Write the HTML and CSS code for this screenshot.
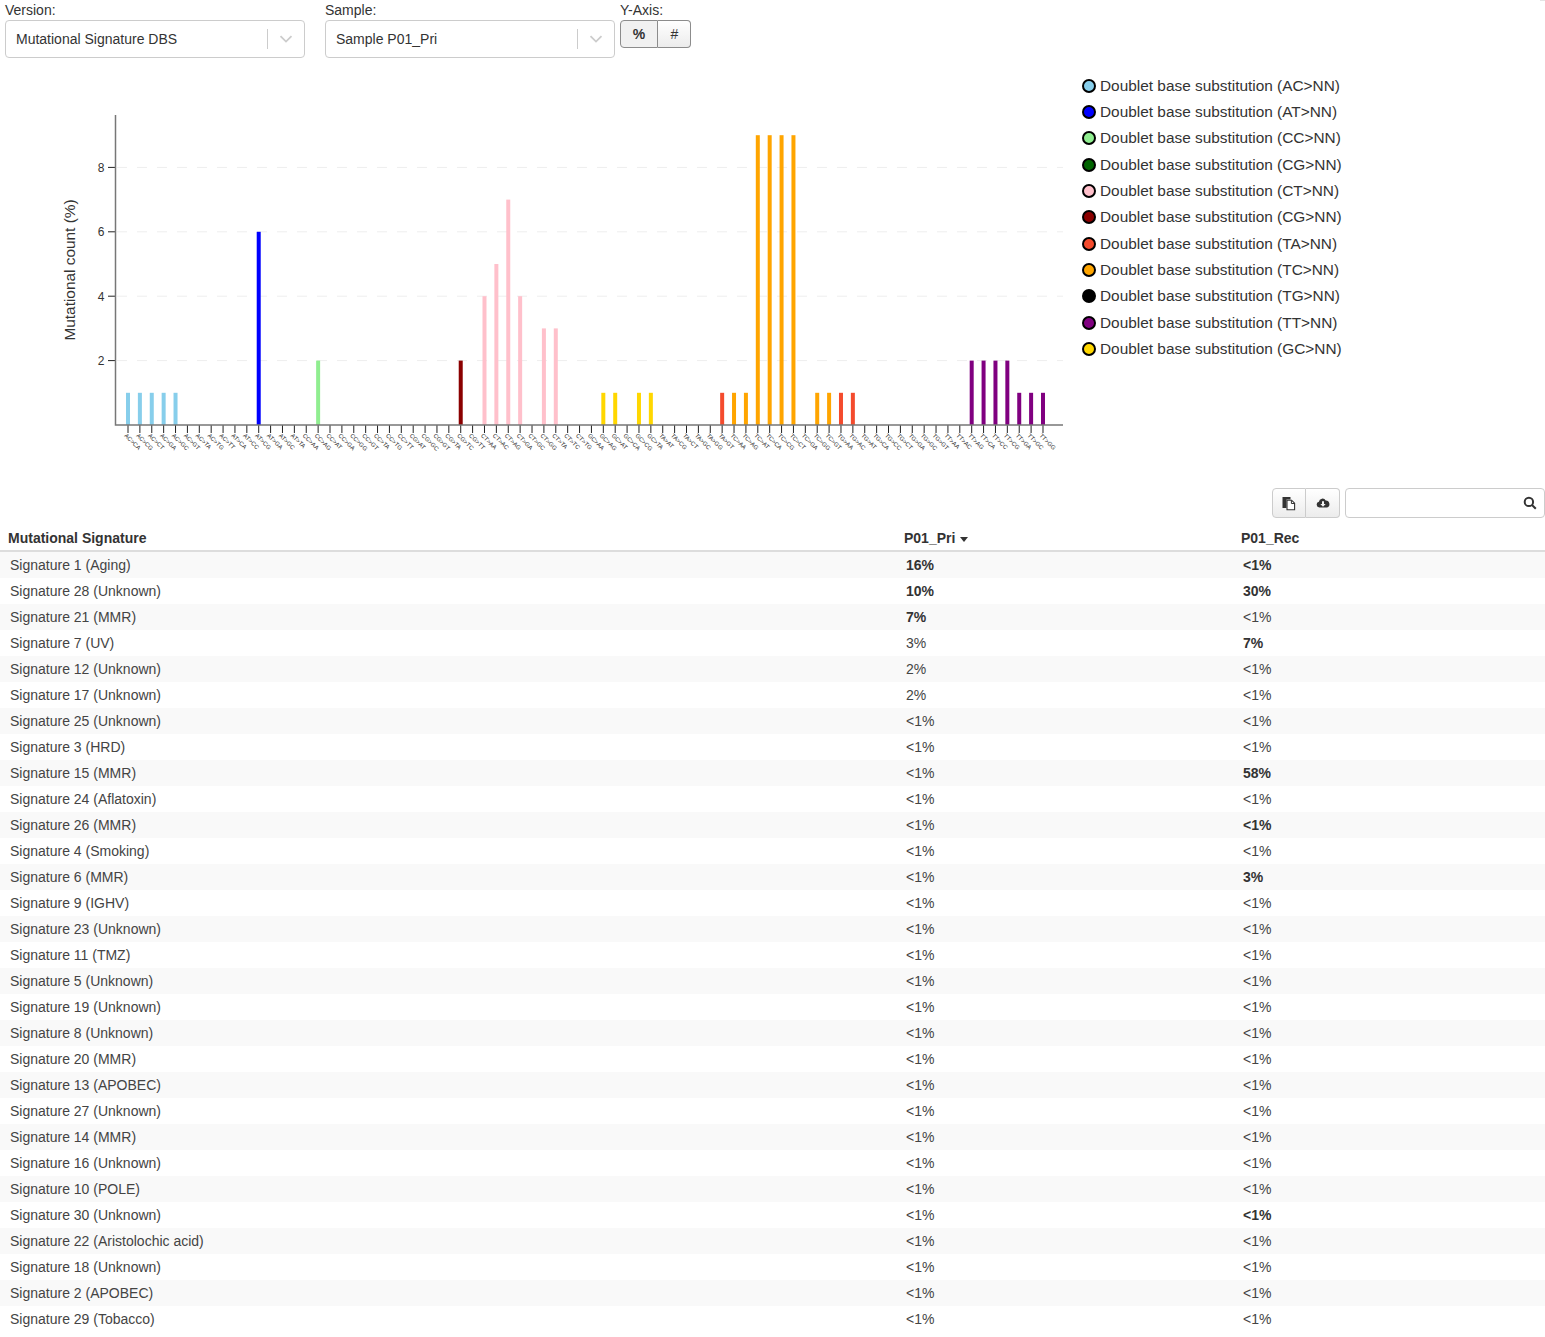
FILE: index.html
```html
<!DOCTYPE html>
<html lang="en">
<head>
    <meta charset="UTF-8">
    <meta name="viewport" content="width=device-width, initial-scale=1.0">
    <title>Mutational Signature</title>
    <link rel="stylesheet" href="styles.css">
</head>
<body>
    <span class="corner"></span>
    <div class="filters">
        <div class="filter filter-version">
            <label>Version:</label>
            <div class="select">
                <span class="select-value">Mutational Signature DBS</span>
                <span class="select-sep"></span>
                <svg class="select-arrow" viewBox="0 0 20 20"><path d="M4.5 7.2 L10 12.6 L15.5 7.2" /></svg>
            </div>
        </div>
        <div class="filter filter-sample">
            <label>Sample:</label>
            <div class="select">
                <span class="select-value">Sample P01_Pri</span>
                <span class="select-sep"></span>
                <svg class="select-arrow" viewBox="0 0 20 20"><path d="M4.5 7.2 L10 12.6 L15.5 7.2" /></svg>
            </div>
        </div>
        <div class="filter">
            <label>Y-Axis:</label>
            <div class="btn-group">
                <button type="button" class="btn btn-pct">%</button>
                <button type="button" class="btn btn-num">#</button>
            </div>
        </div>
    </div>

    <div class="chart-row">
        <svg id="chart" class="chart" width="1075" height="410" viewBox="0 0 1075 410"></svg>
        <ul class="legend">
            <li><span class="dot c-ac"></span>Doublet base substitution (AC&gt;NN)</li>
            <li><span class="dot c-at"></span>Doublet base substitution (AT&gt;NN)</li>
            <li><span class="dot c-cc"></span>Doublet base substitution (CC&gt;NN)</li>
            <li><span class="dot c-cg"></span>Doublet base substitution (CG&gt;NN)</li>
            <li><span class="dot c-ct"></span>Doublet base substitution (CT&gt;NN)</li>
            <li><span class="dot c-cg2"></span>Doublet base substitution (CG&gt;NN)</li>
            <li><span class="dot c-ta"></span>Doublet base substitution (TA&gt;NN)</li>
            <li><span class="dot c-tc"></span>Doublet base substitution (TC&gt;NN)</li>
            <li><span class="dot c-tg"></span>Doublet base substitution (TG&gt;NN)</li>
            <li><span class="dot c-tt"></span>Doublet base substitution (TT&gt;NN)</li>
            <li><span class="dot c-gc"></span>Doublet base substitution (GC&gt;NN)</li>
        </ul>
    </div>

    <div class="toolbar">
        <div class="btn-group">
            <button type="button" class="btn btn-icon">
                <svg viewBox="0 0 14 15" width="14" height="15"><path class="ic" d="M0.5 1h8v2.5H4.5V12H0.5z"/><path class="ic-doc" d="M5 4.2h4.6l3 3v6.6H5z"/><path class="ic-fold" d="M9.4 4.5v3h3"/></svg>
            </button>
            <button type="button" class="btn btn-icon">
                <svg viewBox="0 0 14 14" width="14" height="14"><path class="ic" fill-rule="evenodd" d="M3.4 11.6A3 3 0 0 1 2.9 5.7 3.6 3.6 0 0 1 9.7 4.6 3.6 3.6 0 0 1 11 11.6zM6 5.2v2.7H4.3L7 10.7l2.7-2.8H8V5.2z"/></svg>
            </button>
        </div>
        <div class="search">
            <svg viewBox="0 0 14 14" width="14" height="14"><circle class="ic-line" cx="5.9" cy="5.9" r="4.2"/><path class="ic-line" d="M9 9l3.8 3.8"/></svg>
        </div>
    </div>

    <table class="sig-table">
        <colgroup>
            <col class="col-name">
            <col class="col-pri">
            <col class="col-rec">
        </colgroup>
        <thead>
            <tr><th>Mutational Signature</th><th>P01_Pri <span class="caret"></span></th><th>P01_Rec</th></tr>
        </thead>
        <tbody>
            <tr><td>Signature 1 (Aging)</td><td><b>16%</b></td><td><b>&lt;1%</b></td></tr>
            <tr><td>Signature 28 (Unknown)</td><td><b>10%</b></td><td><b>30%</b></td></tr>
            <tr><td>Signature 21 (MMR)</td><td><b>7%</b></td><td>&lt;1%</td></tr>
            <tr><td>Signature 7 (UV)</td><td>3%</td><td><b>7%</b></td></tr>
            <tr><td>Signature 12 (Unknown)</td><td>2%</td><td>&lt;1%</td></tr>
            <tr><td>Signature 17 (Unknown)</td><td>2%</td><td>&lt;1%</td></tr>
            <tr><td>Signature 25 (Unknown)</td><td>&lt;1%</td><td>&lt;1%</td></tr>
            <tr><td>Signature 3 (HRD)</td><td>&lt;1%</td><td>&lt;1%</td></tr>
            <tr><td>Signature 15 (MMR)</td><td>&lt;1%</td><td><b>58%</b></td></tr>
            <tr><td>Signature 24 (Aflatoxin)</td><td>&lt;1%</td><td>&lt;1%</td></tr>
            <tr><td>Signature 26 (MMR)</td><td>&lt;1%</td><td><b>&lt;1%</b></td></tr>
            <tr><td>Signature 4 (Smoking)</td><td>&lt;1%</td><td>&lt;1%</td></tr>
            <tr><td>Signature 6 (MMR)</td><td>&lt;1%</td><td><b>3%</b></td></tr>
            <tr><td>Signature 9 (IGHV)</td><td>&lt;1%</td><td>&lt;1%</td></tr>
            <tr><td>Signature 23 (Unknown)</td><td>&lt;1%</td><td>&lt;1%</td></tr>
            <tr><td>Signature 11 (TMZ)</td><td>&lt;1%</td><td>&lt;1%</td></tr>
            <tr><td>Signature 5 (Unknown)</td><td>&lt;1%</td><td>&lt;1%</td></tr>
            <tr><td>Signature 19 (Unknown)</td><td>&lt;1%</td><td>&lt;1%</td></tr>
            <tr><td>Signature 8 (Unknown)</td><td>&lt;1%</td><td>&lt;1%</td></tr>
            <tr><td>Signature 20 (MMR)</td><td>&lt;1%</td><td>&lt;1%</td></tr>
            <tr><td>Signature 13 (APOBEC)</td><td>&lt;1%</td><td>&lt;1%</td></tr>
            <tr><td>Signature 27 (Unknown)</td><td>&lt;1%</td><td>&lt;1%</td></tr>
            <tr><td>Signature 14 (MMR)</td><td>&lt;1%</td><td>&lt;1%</td></tr>
            <tr><td>Signature 16 (Unknown)</td><td>&lt;1%</td><td>&lt;1%</td></tr>
            <tr><td>Signature 10 (POLE)</td><td>&lt;1%</td><td>&lt;1%</td></tr>
            <tr><td>Signature 30 (Unknown)</td><td>&lt;1%</td><td><b>&lt;1%</b></td></tr>
            <tr><td>Signature 22 (Aristolochic acid)</td><td>&lt;1%</td><td>&lt;1%</td></tr>
            <tr><td>Signature 18 (Unknown)</td><td>&lt;1%</td><td>&lt;1%</td></tr>
            <tr><td>Signature 2 (APOBEC)</td><td>&lt;1%</td><td>&lt;1%</td></tr>
            <tr><td>Signature 29 (Tobacco)</td><td>&lt;1%</td><td>&lt;1%</td></tr>
        </tbody>
    </table>

    <script src="chart.js"></script>
</body>
</html>
```

FILE: styles.css
```css
html, body {
    margin: 0;
    padding: 0;
}
body {
    font-family: 'Liberation Sans', Arial, sans-serif;
    font-size: 14px;
    color: #333;
    background: #fff;
    height: 1337px;
    overflow: hidden;
}
.corner {
    position: absolute;
    top: 0;
    right: 0;
    width: 5px;
    height: 1px;
    background: #e4e4e4;
}

/* filters on top */
.filters {
    display: flex;
    padding-left: 5px;
    height: 58px;
}
.filter label {
    display: block;
    height: 20px;
    line-height: 20px;
}
.filter-version {
    width: 300px;
    margin-right: 20px;
}
.filter-sample {
    width: 290px;
    margin-right: 5px;
}
.select {
    display: flex;
    align-items: center;
    height: 38px;
    box-sizing: border-box;
    border: 1px solid #ccc;
    border-radius: 4px;
    padding-left: 10px;
}
.select-value {
    flex: 1;
}
.select-sep {
    width: 1px;
    height: 20px;
    background: #ccc;
}
.select-arrow {
    width: 20px;
    height: 20px;
    margin: 0 8px;
    fill: none;
    stroke: #ccc;
    stroke-width: 1.8;
}
.btn-group {
    display: flex;
}
.btn {
    font-family: inherit;
    font-size: 14px;
    color: #333;
    background: linear-gradient(#fff, #e6e6e6);
    border: 1px solid #ccc;
    height: 28px;
    padding: 0;
    margin: 0;
    display: block;
}
.btn:first-child {
    border-radius: 4px 0 0 4px;
}
.btn:last-child {
    border-radius: 0 4px 4px 0;
    border-left: none;
}
.btn-pct {
    width: 38px;
    font-weight: bold;
    border-color: #8c8c8c;
    background: #f1f1f1;
}
.btn-num {
    width: 33px;
    padding-left: 1px;
    border-color: #8c8c8c;
    background: linear-gradient(#fff, #ececec);
}

/* chart and legend */
.chart-row {
    display: flex;
    height: 430px;
}
.chart {
    display: block;
    margin-top: 0;
}
.chart .axis {
    stroke: #777;
    stroke-width: 1.5;
    fill: none;
}
.chart .tick {
    stroke: #222;
    stroke-width: 1;
}
.chart .grid {
    stroke: #eee;
    stroke-width: 1;
    stroke-dasharray: 10 10;
}
.chart .y-num {
    font-size: 12px;
    fill: #333;
    text-anchor: end;
}
.chart .y-title {
    font-size: 15.4px;
    fill: #333;
    text-anchor: middle;
}
.chart .x-label {
    font-size: 6px;
    fill: #333;
}
.legend {
    list-style: none;
    margin: 14.6px 0 0;
    padding: 0 0 0 7px;
    font-size: 15.4px;
}
.legend li {
    display: flex;
    align-items: center;
    height: 26.33px;
    white-space: nowrap;
}
.dot {
    width: 10px;
    height: 10px;
    border: 2px solid #000;
    border-radius: 50%;
    margin-right: 4px;
}
.c-ac { background: #87ceeb; }
.c-at { background: #0000ff; }
.c-cc { background: #90ee90; }
.c-cg { background: #006400; }
.c-ct { background: #ffc0cb; }
.c-cg2 { background: #8b0000; }
.c-ta { background: #f44b2d; }
.c-tc { background: #ffa500; }
.c-tg { background: #000; }
.c-tt { background: #800080; }
.c-gc { background: #ffd700; }

/* table toolbar */
.toolbar {
    display: flex;
    justify-content: flex-end;
    height: 30px;
}
.btn-icon {
    width: 34px;
    height: 30px;
    background: linear-gradient(#fff, #ececec);
    display: flex;
    align-items: center;
    justify-content: center;
}
.toolbar .btn-group {
    margin-right: 5px;
}
.search {
    width: 200px;
    box-sizing: border-box;
    border: 1px solid #ccc;
    border-radius: 4px;
    display: flex;
    align-items: center;
    justify-content: flex-end;
    padding-right: 7px;
}
.ic {
    fill: #333;
}
.ic-doc {
    fill: #fff;
    stroke: #333;
    stroke-width: 1.1;
}
.ic-fold {
    fill: none;
    stroke: #333;
    stroke-width: 1;
}
.ic-line {
    fill: none;
    stroke: #333;
    stroke-width: 2;
}

/* signature table */
.sig-table {
    width: 1545px;
    table-layout: fixed;
    border-collapse: collapse;
    margin-top: 6px;
}
.col-name { width: 896px; }
.col-pri { width: 337px; }
.col-rec { width: 312px; }
.sig-table th {
    text-align: left;
    height: 24px;
    padding: 2px 0 0 8px;
    border-bottom: 2px solid #ddd;
    line-height: 20px;
}
.sig-table td {
    height: 26px;
    padding: 0 0 0 10px;
    line-height: 20px;
    color: #444;
}
.sig-table td b {
    color: #333;
}
.sig-table tbody tr:nth-child(odd) {
    background: #f9f9f9;
}
.caret {
    display: inline-block;
    margin-left: 1px;
    vertical-align: middle;
    border-top: 5px solid #333;
    border-left: 4.5px solid transparent;
    border-right: 4.5px solid transparent;
}
```

FILE: chart.js
```js
// DBS78 channels, grouped by reference doublet
const groups = [
    ['AC', ['CA', 'CG', 'CT', 'GA', 'GC', 'GT', 'TA', 'TG', 'TT'], '#87ceeb'],
    ['AT', ['CA', 'CC', 'CG', 'GA', 'GC', 'TA'], '#0000ff'],
    ['CC', ['AA', 'AG', 'AT', 'GA', 'GG', 'GT', 'TA', 'TG', 'TT'], '#90ee90'],
    ['CG', ['AT', 'GC', 'GT', 'TA', 'TC', 'TT'], '#8b0000'],
    ['CT', ['AA', 'AC', 'AG', 'GA', 'GC', 'GG', 'TA', 'TC', 'TG'], '#ffc0cb'],
    ['GC', ['AA', 'AG', 'AT', 'CA', 'CG', 'TA'], '#ffd700'],
    ['TA', ['AT', 'CG', 'CT', 'GC', 'GG', 'GT'], '#f44b2d'],
    ['TC', ['AA', 'AG', 'AT', 'CA', 'CG', 'CT', 'GA', 'GG', 'GT'], '#ffa500'],
    ['TG', ['AA', 'AC', 'AT', 'CA', 'CC', 'CT', 'GA', 'GC', 'GT'], '#f44b2d'],
    ['TT', ['AA', 'AC', 'AG', 'CA', 'CC', 'CG', 'GA', 'GC', 'GG'], '#800080']
];

// channel index -> value in %
const values = {
    0: 1, 1: 1, 2: 1, 3: 1, 4: 1,
    11: 6, 16: 2, 28: 2,
    30: 4, 31: 5, 32: 7, 33: 4, 35: 3, 36: 3,
    40: 1, 41: 1, 43: 1, 44: 1,
    50: 1, 51: 1, 52: 1,
    53: 9, 54: 9, 55: 9, 56: 9,
    58: 1, 59: 1, 60: 1, 61: 1,
    71: 2, 72: 2, 73: 2, 74: 2, 75: 1, 76: 1, 77: 1
};

const svg = document.getElementById('chart');
const NS = 'http://www.w3.org/2000/svg';
// the svg starts at y=58 on the page
const baseY = 367;
const unit = 32.2;
const x0 = 128;
const step = 11.883;

function add(tag, attrs, text) {
    const el = document.createElementNS(NS, tag);
    for (const key in attrs) el.setAttribute(key, attrs[key]);
    if (text) el.textContent = text;
    svg.appendChild(el);
    return el;
}

[2, 4, 6, 8].forEach(v => {
    const y = baseY - v * unit;
    add('line', { class: 'grid', x1: 117, x2: 1063, y1: y, y2: y });
    add('line', { class: 'tick', x1: 108, x2: 115, y1: y, y2: y });
    add('text', { class: 'y-num', x: 104.5, y: y + 4.6 }, String(v));
});

let i = 0;
groups.forEach(([ref, alts, color]) => {
    alts.forEach(alt => {
        const x = x0 + i * step;
        add('line', { class: 'tick', x1: x, x2: x, y1: baseY, y2: baseY + 8 });
        add('text', {
            class: 'x-label',
            x: x - 4,
            y: baseY + 11,
            transform: `rotate(45 ${x - 4} ${baseY + 11})`
        }, `${ref}>${alt}`);
        if (values[i]) {
            add('rect', { x: x - 2, y: baseY - values[i] * unit, width: 4, height: values[i] * unit, fill: color });
        }
        i++;
    });
});

add('path', { class: 'axis', d: `M115.5 57V${baseY}H1063` });
add('text', { class: 'y-title', x: 0, y: 0, transform: `translate(75 212) rotate(-90)` }, 'Mutational count (%)');
```
